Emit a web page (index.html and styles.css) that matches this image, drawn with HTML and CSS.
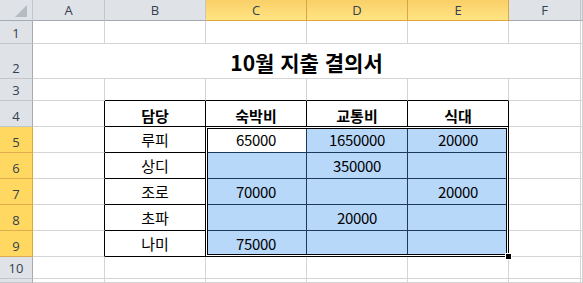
FILE: index.html
```html
<!DOCTYPE html>
<html lang="ko">
<head>
    <meta charset="UTF-8">
    <meta name="viewport" content="width=device-width, initial-scale=1.0">
    <title>10월 지출 결의서</title>
    <link rel="stylesheet" href="styles.css">
</head>
<body>
    <div class="sheet">
        <!-- column headers -->
        <div class="hd corner"><span class="tri"></span></div>
        <div class="hd">A</div>
        <div class="hd">B</div>
        <div class="hd on">C</div>
        <div class="hd on">D</div>
        <div class="hd on">E</div>
        <div class="hd">F</div>
        <div class="hd"></div>

        <!-- row 1 -->
        <div class="rh">1</div>
        <div class="c"></div><div class="c"></div><div class="c"></div><div class="c"></div>
        <div class="c"></div><div class="c"></div><div class="c"></div>

        <!-- row 2: merged title -->
        <div class="rh">2</div>
        <div class="c title">10월 지출 결의서</div>
        <div class="c"></div>

        <!-- row 3 -->
        <div class="rh">3</div>
        <div class="c"></div>
        <div class="c edge-b"></div><div class="c edge-b"></div><div class="c edge-b"></div><div class="c edge-b"></div>
        <div class="c"></div><div class="c"></div>

        <!-- row 4: table head -->
        <div class="rh">4</div>
        <div class="c edge-r"></div>
        <div class="c tb th">담당</div>
        <div class="c tb th">숙박비</div>
        <div class="c tb th">교통비</div>
        <div class="c tb th">식대</div>
        <div class="c"></div><div class="c"></div>

        <!-- rows 5-9 -->
        <div class="rh on">5</div>
        <div class="c edge-r"></div>
        <div class="c tb">루피</div>
        <div class="c tb sel active num">65000</div>
        <div class="c tb sel num">1650000</div>
        <div class="c tb sel num">20000</div>
        <div class="c"></div><div class="c"></div>

        <div class="rh on">6</div>
        <div class="c edge-r"></div>
        <div class="c tb">상디</div>
        <div class="c tb sel num"></div>
        <div class="c tb sel num">350000</div>
        <div class="c tb sel num"></div>
        <div class="c"></div><div class="c"></div>

        <div class="rh on">7</div>
        <div class="c edge-r"></div>
        <div class="c tb">조로</div>
        <div class="c tb sel num">70000</div>
        <div class="c tb sel num"></div>
        <div class="c tb sel num">20000</div>
        <div class="c"></div><div class="c"></div>

        <div class="rh on">8</div>
        <div class="c edge-r"></div>
        <div class="c tb">초파</div>
        <div class="c tb sel num"></div>
        <div class="c tb sel num">20000</div>
        <div class="c tb sel num"></div>
        <div class="c"></div><div class="c"></div>

        <div class="rh on">9</div>
        <div class="c edge-r"></div>
        <div class="c tb">나미</div>
        <div class="c tb sel num">75000</div>
        <div class="c tb sel num"></div>
        <div class="c tb sel num"></div>
        <div class="c"></div><div class="c"></div>

        <!-- row 10 -->
        <div class="rh">10</div>
        <div class="c"></div><div class="c"></div><div class="c"></div><div class="c"></div>
        <div class="c"></div><div class="c"></div><div class="c"></div>

        <!-- row 11 (cut off) -->
        <div class="rh"></div>
        <div class="c"></div><div class="c"></div><div class="c"></div><div class="c"></div>
        <div class="c"></div><div class="c"></div><div class="c"></div>

        <!-- selection outline over C5:E9 -->
        <div class="selection"><span class="handle"></span></div>
    </div>
</body>
</html>
```

FILE: styles.css
```css
:root {
    --grid: #d4d4d4;
    --hd-bg: #dfe3e8;
    --hd-line: #b2b7bd;
    --hd-text: #34404e;
    --sel-bg: #b8d8fa;
    --sel-line: #1b3a5e;
}

* {
    margin: 0;
    padding: 0;
    box-sizing: border-box;
}

body {
    width: 583px;
    height: 283px;
    overflow: hidden;
    background: #fff;
    font-family: 'Noto Sans CJK KR', sans-serif;
}

.sheet {
    position: relative;
    display: grid;
    grid-template-columns: 33px 72px 101px 101px 101px 101px 72px 1fr;
    grid-template-rows: 21px 23px 35px 22px repeat(6, 26px) 22px 1fr;
    height: 283px;
}

/* headers */
.hd,
.rh {
    display: flex;
    justify-content: center;
    background: var(--hd-bg);
    color: var(--hd-text);
    font-family: 'Open Sans', 'Noto Sans', sans-serif;
    font-size: 13px;
    border-right: 1px solid var(--hd-line);
    border-bottom: 1px solid var(--hd-line);
}

.hd {
    align-items: center;
    border-right-color: #c3c7cc;
    border-bottom-color: #a4aab1;
}

.rh {
    align-items: flex-end;
    padding-bottom: 1px;
    border-right-color: #a4aab1;
    border-bottom-color: #c3c7cc;
}

.hd.on {
    background: linear-gradient(#f9cf68, #ffe582);
    border-right-color: #d9a547;
    border-bottom-color: #e2a53a;
}

.rh.on {
    background: #ffd862;
    border-right-color: #e2a53a;
    border-bottom-color: #e0ac4e;
}

.corner {
    justify-content: flex-end;
    align-items: flex-end;
    padding: 0 5px 3px 0;
}

.tri {
    width: 0;
    height: 0;
    border-left: 12px solid transparent;
    border-bottom: 12px solid #b6bbc1;
}

/* cells */
.c {
    display: flex;
    align-items: center;
    justify-content: center;
    font-size: 15px;
    color: #000;
    border-right: 1px solid var(--grid);
    border-bottom: 1px solid var(--grid);
    overflow: hidden;
    white-space: nowrap;
}

.title {
    grid-column: span 6;
    font-size: 21px;
    font-weight: 700;
    padding-top: 2px;
}

.edge-r {
    border-right-color: #000;
}

.edge-b {
    border-bottom-color: #000;
}

.tb {
    border-color: #000;
}

.th {
    font-weight: 700;
    padding-top: 3px;
}

.num {
    letter-spacing: -0.3px;
}

.sel {
    background: var(--sel-bg);
    border-color: var(--sel-line);
}

.sel.active {
    background: #fff;
}

.selection {
    position: absolute;
    grid-area: 6 / 4 / 11 / 7;
    top: -1px;
    left: -1px;
    right: 0;
    bottom: 0;
    border: 1px solid #000;
    box-shadow: inset 0 0 0 1px #fff, inset 0 0 0 2px #000;
    pointer-events: none;
}

.handle {
    position: absolute;
    right: -4px;
    bottom: -4px;
    width: 7px;
    height: 7px;
    background: #000;
    border: 1px solid #fff;
}
```
